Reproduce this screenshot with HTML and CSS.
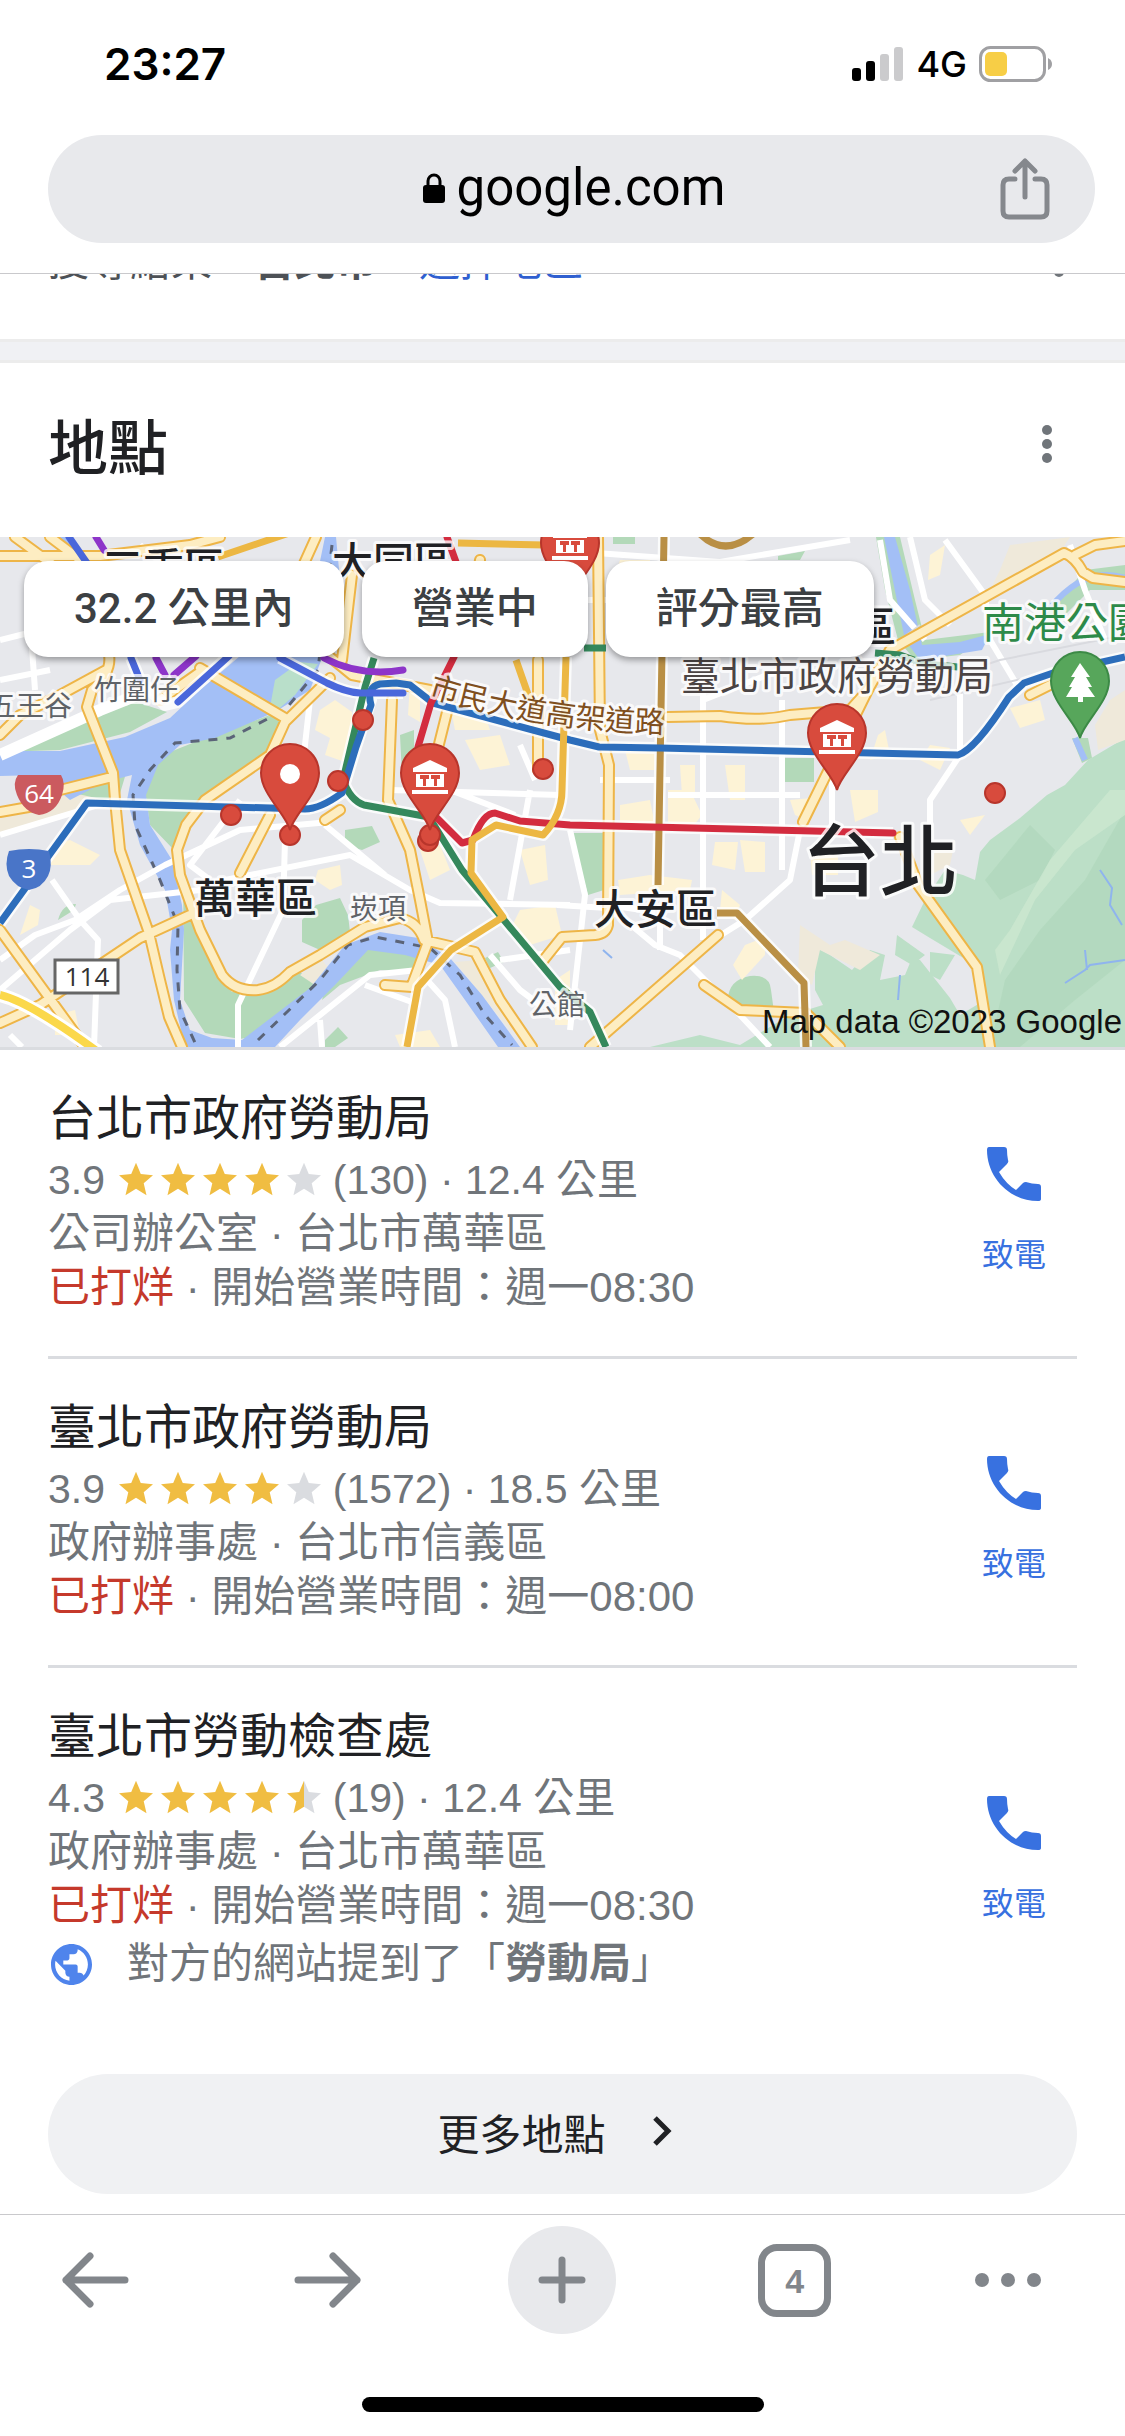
FILE: index.html
```html
<!DOCTYPE html>
<html lang="zh-Hant">
<head>
  <meta charset="UTF-8">
  <meta name="viewport" content="width=device-width, initial-scale=1.0">
  <title>地點 - google.com</title>
  <link rel="stylesheet" href="styles.css">
</head>
<body>
  <header class="top">
    <div class="status">
      <span class="time">23:27</span>
      <div class="status-right">
        <svg class="signal" viewBox="0 0 52 36">
          <rect x="0" y="22" width="9" height="13" rx="3"/>
          <rect x="14" y="15" width="9" height="20" rx="3"/>
          <rect class="off" x="28" y="8" width="9" height="27" rx="3"/>
          <rect class="off" x="42" y="1" width="9" height="34" rx="3"/>
        </svg>
        <span class="network">4G</span>
        <svg class="battery" viewBox="0 0 74 36">
          <rect x="1.5" y="1.5" width="64" height="33" rx="10" fill="none" stroke="#a0a0a3" stroke-width="3"/>
          <rect x="6" y="6" width="22" height="24" rx="5" fill="#f7ce46"/>
          <path d="M69 12q4 2 4 6t-4 6z" fill="#a0a0a3"/>
        </svg>
      </div>
    </div>
    <div class="address">
      <div class="url">
        <svg class="lock" viewBox="0 0 22 30">
          <rect x="0" y="12" width="22" height="18" rx="3"/>
          <path d="M5 13V8a6 6 0 0 1 12 0v5" fill="none" stroke="#000" stroke-width="3"/>
        </svg>
        <span>google.com</span>
      </div>
      <button class="share" aria-label="分享">
        <svg viewBox="0 0 50 62">
          <path d="M15 21H9q-6 0-6 6v26q0 6 6 6h32q6 0 6-6V27q0-6-6-6h-6M25 39V3M15 13L25 3l10 10"/>
        </svg>
      </button>
    </div>
  </header>

  <main>
    <div class="region">
      <div class="region-line">
        <span>搜尋結果</span><b>台北市</b><a href="#">選擇地區</a>
        <svg class="region-more" viewBox="0 0 12 40"><circle cx="6" cy="6" r="5"/><circle cx="6" cy="20" r="5"/><circle cx="6" cy="34" r="5"/></svg>
      </div>
    </div>
    <div class="divider"></div>

    <div class="heading">
      <h2>地點</h2>
      <button class="more" aria-label="更多選項">
        <svg viewBox="0 0 12 40"><circle cx="6" cy="6" r="5"/><circle cx="6" cy="20" r="5"/><circle cx="6" cy="34" r="5"/></svg>
      </button>
    </div>

    <div class="map">
      <svg class="map-art" viewBox="0 537 1125 510" preserveAspectRatio="xMidYMid slice">
        <defs>
          <path id="pin" d="M0 0C-4-16-29-36-29-57A29 29 0 0 1 29-57C29-36 4-16 0 0Z"/>
          <g id="museum">
            <path d="M-17-62V-66L0-74 17-66V-62ZM-14-60H14V-47H-14ZM-18-44H18V-40H-18Z" fill="#fff"/>
            <path d="M-10-59H-1V-55H-4V-48H-7V-55H-10ZM1-59H10V-55H7V-48H4V-55H1Z" fill="#d84b3d"/>
          </g>
          <path id="expressway" d="M428 696Q545 732 672 733"/>
          <path id="roads" d="M0 556H100L190 545 220 537M15 537L60 570M50 537L120 590M109 655Q112 672 92 690L87 707 113 773 115 800 120 850 149 933 160 980 169 1017 182 1047M106 670L60 695 20 715 0 735M200 668L285 718M330 678L285 722 270 755 205 800 186 825 177 850 180 875 200 930 222 975Q235 992 258 990 275 988 290 972L320 955 365 927 400 918Q418 922 424 940L475 952 500 1000 532 1047M316 537L302 568M352 575L342 660M330 657L352 675 430 690M392 700L388 800 410 850 420 900 428 942 412 985M0 812L40 805M60 790L108 778M0 1023L40 1005 140 938 190 915M0 930L85 1047M270 815L240 873M450 700L435 760M538 660V770M598 537L600 730 609 765 608 925Q606 934 595 935L562 937 542 962M668 717L720 716Q760 722 790 715L850 710 868 690 890 650 1064 553Q1075 557 1083 572L1093 578 1125 582M1075 555L1095 545 1125 541M868 690L803 822M718 935L590 1047M704 985L740 1010 806 1013 840 1047M900 837L918 885 977 967 990 1047M340 810L325 820M1030 695L1050 685M480 560L470 620M385 985L412 987M200 672L160 700"/>
        </defs>
        <rect y="537" width="1125" height="510" fill="#e7e8ec"/>

        <!-- parks -->
        <g fill="#b3d9b9">
          <path d="M0 752L60 722 130 700 167 712 130 732 60 750ZM270 655L300 657 250 700 240 695ZM145 790L150 760 200 740 270 715 282 722 268 750 205 795 180 830 174 850 150 825ZM40 800L100 765 130 760 118 800ZM183 865L192 912 212 965 232 992 265 992 300 972 318 988 262 1035 240 1039 205 1033 184 1000ZM345 830L372 826 380 842 362 850 345 845ZM302 920L316 905 340 898 348 915 350 932 320 950 302 942ZM330 970L365 940 418 955 412 972 380 970 340 985 322 1000ZM485 958L498 952 504 962 490 968ZM325 1040L338 1027 348 1038 335 1047 325 1047ZM571 833H604V890L588 895ZM785 758H814V782H785ZM613 537H635V544H613ZM778 556L805 551 800 560H778ZM400 735L414 730V765L402 775ZM58 920Q62 904 76 904L74 910ZM728 1000Q728 980 750 976Q770 974 771 990L774 1012H740Z"/>
          <path d="M876 537H900L915 600 925 640 990 632 960 655 915 660 898 640 885 590ZM1045 615L1085 570 1125 565V590L1090 590 1060 620ZM1072 738H1088L1092 758 1082 763Z"/>
        </g>
        <g fill="#bcdfc7">
          <path d="M1125 738L1088 760 1065 785 1047 795 1020 818 990 840 980 852 975 880 963 875 945 870 925 900 912 927 930 938 975 965 985 1000 960 1015 950 998 920 960 912 958 905 975 880 980 885 955 870 950 852 970 830 955 815 947 815 990 823 1005 790 1015 740 1045 700 1035 650 1047H1125Z"/>
          <path d="M897 935L925 955 912 965 895 955ZM930 952L955 955 940 980 930 975Z"/>
        </g>
        <path d="M1125 810L1085 880 1040 930 1005 980 990 1047H1020L1075 1000 1125 960ZM1030 825L1055 850 1040 880 1000 900 985 880Z" fill="#aed6b9" opacity=".6"/>
        <path d="M1110 790L1050 860 1010 930 995 950 1000 975 1035 900 1075 850 1125 815V790Z" fill="#cce7cf" opacity=".8"/>
        <g fill="#efe9da">
          <path d="M0 810L60 790 105 800 40 822 0 835ZM1010 545L1070 537 1055 560 1020 585 985 600 1000 570ZM800 925L830 945 845 940 880 955 860 970 820 950 812 985 798 975ZM1110 700L1125 690V740L1098 750 1095 725ZM455 962L480 960 525 1030 510 1030ZM300 975L322 960 330 970 315 985ZM955 840L950 865 930 875 935 850Z"/>
        </g>
        <g fill="#fdf3d6">
          <path d="M320 710L335 700 352 712V748L345 762 325 755 330 738 315 730ZM410 683L420 695V722L408 715ZM450 705L480 700 490 730H455ZM620 560H650V575H615ZM620 805L650 800 655 825H620ZM668 790H690L702 815 690 830 668 822ZM715 842H738L735 870 712 865ZM740 840L765 842V872H745ZM618 880L650 875 692 880 690 890 620 895ZM722 890L740 905 735 920 720 910ZM745 945L765 937 765 955 742 980 733 965ZM850 790H878V812L855 822ZM878 735L885 730 890 755 870 760ZM930 745L950 748 940 770 920 760ZM1010 708L1040 700 1045 720 1020 728ZM625 750H655V770H630ZM725 765H745V800H730ZM680 765H695V795H682ZM318 870L340 865 342 885 330 890 315 880ZM50 845L70 840 100 855 90 865 50 865ZM30 905L40 910 38 925 20 935ZM520 850L545 845 548 880 530 885ZM520 910L555 905 562 935 530 945 510 930ZM420 850L440 845 450 870 430 880ZM395 1035L430 1030 440 1047H400ZM55 1015L75 1010 80 1035 55 1035ZM810 850H838V875H812ZM930 555L945 545 940 575 928 580ZM555 980L570 970V1025H555ZM790 800L812 798 808 820 795 815ZM960 820L985 815 970 835ZM465 740L500 735 510 765 480 770Z"/>
        </g>

        <!-- rivers -->
        <g fill="#a3bff6">
          <path d="M0 751L60 751 125 737 170 718 200 690 240 656 312 600 325 537H336L340 580 325 650 310 690 275 712 215 738 180 745 158 765 146 795 150 825 172 860 182 905 184 930 180 1000 190 1030 212 1038 242 1040 310 988 345 945 380 932 418 938 450 958 482 995 520 1047H498L465 1000 440 965 405 955 368 950 335 985 300 1020 275 1047H185L174 1000 170 950 172 930 165 890 140 845 127 800 132 775 105 782 70 800 40 775 0 776Z"/>
          <path d="M55 537H68L92 562H80ZM884 537H895L910 590 922 645 960 642 990 634 982 650 920 660 905 640Z"/>
        </g>
        <path d="M268 718L275 680 300 662 318 664 295 695Z" fill="#b9dfca"/>
        <path d="M1050 608Q1085 565 1125 578M1075 738L1085 760" fill="none" stroke="#a3bff6" stroke-width="6"/>
        <path d="M1100 870L1112 888 1110 905 1122 925M1065 983L1085 970 1090 965 1125 960M1085 950L1087 970M900 975L898 1000M603 950L612 958" fill="none" stroke="#8fb4ee" stroke-width="2"/>
        <path d="M332 545L328 580 318 670 285 710 230 738 175 743 150 770 133 795 135 825 160 880 178 925 177 970 180 1010 197 1047M258 1040L320 980 348 945 375 937 430 948 460 975 485 1015 512 1045" fill="none" stroke="#5b6478" stroke-width="3" stroke-dasharray="9 9"/>

        <!-- minor roads -->
        <g fill="none" stroke="#fff" stroke-width="6" stroke-linejoin="round">
          <path d="M0 755L100 710 150 690" stroke-width="12"/>
          <path d="M0 835L115 800M0 990L70 930 110 900 200 890M0 960L35 935 75 920 120 890 165 865 240 830 330 822M52 880L80 920 98 940 94 1047M240 800L190 865 210 880M285 840L283 910 238 1005V1047M200 885L350 855 410 890 440 903 570 905M325 825L385 875M280 1047L370 975 418 970 445 1000 455 1047M365 985L420 1005M320 1020L322 1047"/>
          <path d="M0 640L40 630M0 680L50 670M30 620L35 690M300 790L310 700M390 790L560 795M450 790L515 815M530 790L510 900M520 745L535 780M570 830L585 895 570 1030M557 905L608 908 625 920 655 945 680 955 740 1015 770 1047M490 955L520 990 540 1005M500 960L570 950"/>
          <path d="M555 550L720 562 850 540M703 690V940M703 700L780 670M782 700V870M832 750V830M668 795H800M800 830L790 880 745 920 705 945M930 830V800L960 755V690M880 540L890 600 925 640M910 537L925 600 950 625M945 540L985 595 990 640 1020 690M1070 545L1085 590 1105 640M575 600H665M600 780H670M660 905V950M608 905L655 912"/>
          <path d="M920 625L900 640M1125 635L1000 660 985 665M1060 670L930 700" stroke="#d9dadf" stroke-width="2"/>
          <path d="M10 1035L22 1047M140 545L180 580M130 600L260 620" />
        </g>

        <!-- main roads -->
        <use class="road-edge" href="#roads"/>
        <use class="road-fill" href="#roads"/>
        <g fill="none" stroke-linejoin="round">
          <path d="M0 995Q30 1002 98 1052" stroke="#fff" stroke-width="14"/>
          <path d="M0 995Q30 1002 98 1052" stroke="#fbd84a" stroke-width="8"/>
          <path d="M218 557L298 530M458 543L545 545M516 660L530 700" stroke="#ecb743" stroke-width="7"/>
        </g>

        <!-- transit lines, white casing first -->
        <g fill="none" stroke-linejoin="round">
          <path class="casing" d="M0 923L87 803 305 809Q320 809 342 793L356 747 371 700Q370 687 396 683L410 685 433 703 570 740 599 747 660 748 958 755Q975 750 1009 697L1024 683 1053 673 1125 657M566 657L562 790Q562 815 543 835L496 825 472 840 471 873 503 917 451 950 418 987 407 1047M664 537L658 885M717 913H737L804 983 806 1047M374 658L365 687 343 780Q350 800 364 805L429 817 462 870 560 987 590 1012 606 1047M436 817L462 843 473 840Q483 813 495 813L520 821 570 825 893 833M131 658L140 680 165 705 178 702 229 656M280 658L327 683Q345 692 360 693H403"/>
          <g stroke-width="7">
            <path d="M700 534Q725 558 753 534M664 537L658 885M717 913H737L804 983 806 1047" stroke="#b98f45"/>
            <path d="M374 658L365 687 343 780Q350 800 364 805L429 817 462 870 560 987 590 1012 606 1047M584 648H606M875 653L900 655 925 664 958 667" stroke="#35885c"/>
            <path d="M0 923L87 803 305 809Q320 809 342 793L356 747 371 705Q366 687 380 684L396 683 410 685 433 703 570 740 599 747 660 748 958 755Q975 750 1009 697L1024 683 1053 673 1125 657" stroke="#2c6dbb"/>
            <path d="M454 657L431 703 418 747M447 537L456 562M436 817L462 843 473 840Q483 813 495 813L520 821 570 825 893 833" stroke="#d32c3f" stroke-linecap="round"/>
            <path d="M566 657L562 790Q562 815 543 835L496 825 472 840 471 873 503 917 451 950 418 987 407 1047" stroke="#ecb743"/>
            <path d="M69 537L87 563M131 658L140 680M178 702L229 656M280 658L327 683Q345 692 360 693H403" stroke="#4a67db" stroke-linecap="round"/>
            <path d="M96 537L104 550M156 658L165 675M174 675L196 656M324 658Q360 677 403 670" stroke="#8d35c9" stroke-linecap="round"/>
          </g>
        </g>

        <!-- road shields -->
        <path d="M18 775H61Q66 783 62 795 56 813 39 815 24 812 17 795 12 783 18 775Z" fill="#cb5a5f"/>
        <text class="shield" x="39" y="803">64</text>
        <path d="M9 851Q29 847 49 851 53 866 48 876 42 888 29 890 16 888 9 876 4 864 9 851Z" fill="#4975c8"/>
        <text class="shield" x="29" y="878">3</text>
        <rect x="55" y="960" width="63" height="33" fill="#fff" stroke="#666" stroke-width="3"/>
        <text class="shield plain" x="87" y="986">114</text>

        <!-- place names -->
        <g class="names">
          <text class="district" x="102" y="583">三重區</text>
          <text class="district" x="332" y="577">大同區</text>
          <text class="district" x="773" y="642">內湖區</text>
          <text class="district" x="194" y="913">萬華區</text>
          <text class="district" x="594" y="924">大安區</text>
          <text class="village" x="94" y="700">竹圍仔</text>
          <text class="village" x="-12" y="716">五王谷</text>
          <text class="village" x="350" y="919">崁項</text>
          <text class="village" x="529" y="1015">公館</text>
          <text class="road-name"><textPath href="#expressway">市民大道高架道路</textPath></text>
          <text class="poi" x="681" y="690">臺北市政府勞動局</text>
          <text class="park" x="982" y="638">南港公園</text>
          <text class="city" x="802" y="890">台北</text>
        </g>

        <!-- pins -->
        <g fill="#d84b3d" stroke="#b8352b" stroke-width="2">
          <circle cx="363" cy="720" r="10"/><circle cx="338" cy="781" r="10"/>
          <circle cx="543" cy="769" r="10"/><circle cx="231" cy="815" r="10"/>
          <circle cx="995" cy="793" r="10"/><circle cx="290" cy="835" r="10"/>
          <circle cx="428" cy="841" r="10"/><circle cx="430" cy="835" r="10"/>
          <use href="#pin" x="290" y="830"/>
          <use href="#pin" x="430" y="830"/>
          <use href="#pin" x="837" y="790"/>
          <use href="#pin" x="570" y="600"/>
          <use href="#pin" x="1080" y="738" class="green-pin"/>
        </g>
        <circle cx="290" cy="774" r="10" fill="#fff"/>
        <use href="#museum" x="430" y="834"/>
        <use href="#museum" x="837" y="794"/>
        <use href="#museum" x="570" y="600"/>
        <path d="M1080 663L1090 677H1086L1092 687H1088L1095 697H1083V702H1078V697H1066L1072 687H1069L1075 677H1071Z" fill="#fff"/>
        <text class="credit" x="1122" y="1033">Map data ©2023 Google</text>
      </svg>
      <div class="chips">
        <button class="chip">32.2 公里內</button>
        <button class="chip">營業中</button>
        <button class="chip">評分最高</button>
      </div>
    </div>

    <svg class="symbols">
      <symbol id="star" viewBox="2 2 20 19"><path d="M12 17.270L18.180 21l-1.640-7.030L22 9.240l-7.190-.610L12 2 9.190 8.630 2 9.240l5.460 4.730L5.820 21z"/></symbol>
      <symbol id="phone" viewBox="0 0 54 54"><path d="M2 0h15q3 0 3 3 0 5 1 10 1 2-1 4l-8 8q7 12 17 18l7-7q1-1 3-1 6 2 12 2 3 0 3 3v12q0 2-3 2C22 54 0 30 0 3q0-3 2-3z"/></symbol>
    </svg>

    <div class="places">
      <article class="place">
        <div class="info">
          <h3>台北市政府勞動局</h3>
          <p class="rating">3.9 <span class="stars"><svg><use href="#star"/></svg><svg><use href="#star"/></svg><svg><use href="#star"/></svg><svg><use href="#star"/></svg><svg class="empty"><use href="#star"/></svg></span> (130) · 12.4 公里</p>
          <p>公司辦公室 · 台北市萬華區</p>
          <p><span class="closed">已打烊</span> · 開始營業時間：週一08:30</p>
        </div>
        <a class="call" href="#"><svg><use href="#phone"/></svg>致電</a>
      </article>

      <article class="place">
        <div class="info">
          <h3>臺北市政府勞動局</h3>
          <p class="rating">3.9 <span class="stars"><svg><use href="#star"/></svg><svg><use href="#star"/></svg><svg><use href="#star"/></svg><svg><use href="#star"/></svg><svg class="empty"><use href="#star"/></svg></span> (1572) · 18.5 公里</p>
          <p>政府辦事處 · 台北市信義區</p>
          <p><span class="closed">已打烊</span> · 開始營業時間：週一08:00</p>
        </div>
        <a class="call" href="#"><svg><use href="#phone"/></svg>致電</a>
      </article>

      <article class="place">
        <div class="info">
          <h3>臺北市勞動檢查處</h3>
          <p class="rating">4.3 <span class="stars"><svg><use href="#star"/></svg><svg><use href="#star"/></svg><svg><use href="#star"/></svg><svg><use href="#star"/></svg><svg viewBox="2 2 20 19"><path d="M12 17.270L18.180 21l-1.640-7.030L22 9.240l-7.190-.610L12 2z" class="rest"/><path d="M12 2L9.190 8.630 2 9.240l5.460 4.730L5.820 21 12 17.270z"/></svg></span> (19) · 12.4 公里</p>
          <p>政府辦事處 · 台北市萬華區</p>
          <p><span class="closed">已打烊</span> · 開始營業時間：週一08:30</p>
          <p class="mention">
            <svg viewBox="2 2 20 20"><path d="M12 2C6.480 2 2 6.480 2 12s4.480 10 10 10 10-4.480 10-10S17.520 2 12 2zm-1 17.930c-3.950-.490-7-3.850-7-7.930 0-.620.080-1.210.210-1.790L9 15v1c0 1.100.900 2 2 2v1.930zm6.900-2.540c-.260-.810-1-1.390-1.900-1.390h-1v-3c0-.550-.450-1-1-1H8v-2h2c.550 0 1-.450 1-1V7h2c1.100 0 2-.900 2-2v-.410c2.930 1.190 5 4.060 5 7.410 0 2.080-.800 3.970-2.100 5.390z"/></svg>
            <span>對方的網站提到了「<b>勞動局</b>」</span>
          </p>
        </div>
        <a class="call" href="#"><svg><use href="#phone"/></svg>致電</a>
      </article>

      <button class="more-places">更多地點
        <svg viewBox="0 0 36 30"><path d="M3 2l13 13L3 28"/></svg>
      </button>
    </div>
  </main>

  <footer class="bottom">
    <nav class="toolbar">
      <button aria-label="返回"><svg viewBox="0 0 68 56"><path d="M64 28H5M29 4L5 28l24 24"/></svg></button>
      <button aria-label="前進"><svg viewBox="0 0 68 56"><path d="M4 28h59M39 4l24 24-24 24"/></svg></button>
      <button class="add" aria-label="新分頁"><svg viewBox="0 0 48 48"><path d="M24 4v40M4 24h40"/></svg></button>
      <button aria-label="分頁"><span class="tabs">4</span></button>
      <button aria-label="選單"><svg class="dots" viewBox="0 0 68 16"><circle cx="8" cy="8" r="7"/><circle cx="34" cy="8" r="7"/><circle cx="60" cy="8" r="7"/></svg></button>
    </nav>
    <div class="home"></div>
  </footer>
</body>
</html>
```
FILE: styles.css
```css
* { box-sizing: border-box; }
body { margin: 0; background: #fff; color: #202124; font-family: "Liberation Sans", "Noto Sans CJK TC", sans-serif; min-height: 100vh; display: flex; flex-direction: column; }
h2, h3, p { margin: 0; font-weight: 400; }
button { border: none; background: none; padding: 0; font: inherit; color: inherit; cursor: pointer; }
a { color: #2f5fd0; text-decoration: none; }
svg { display: block; }

/* browser top */
.top { border-bottom: 1px solid #c9c9cc; padding: 0 30px 30px 48px; }
.status { display: flex; justify-content: space-between; align-items: center; height: 135px; padding: 0 42px 8px 56px; font-family: Inter, sans-serif; color: #000; }
.time { font-size: 44px; font-weight: 600; }
.status-right { display: flex; align-items: center; gap: 12px; }
.signal { width: 52px; height: 36px; }
.signal .off { fill: #cbcbcd; }
.network { font-size: 36px; font-weight: 500; }
.battery { width: 74px; height: 36px; }
.address { position: relative; display: flex; align-items: center; justify-content: center; height: 108px; border-radius: 54px; background: #e8e9ec; }
.url { display: flex; align-items: center; gap: 12px; padding: 0 0 3px 5px; font-family: Roboto, sans-serif; font-size: 51px; color: #000; }
.lock { width: 22px; height: 30px; }
.share { position: absolute; right: 45px; top: 23px; }
.share svg { width: 50px; height: 62px; fill: none; stroke: #85888d; stroke-width: 5; stroke-linecap: round; stroke-linejoin: round; }

/* region line, scrolled partly under the top bar */
.region { height: 65px; overflow: hidden; padding: 0 60px 0 48px; }
.region-line { display: flex; align-items: center; gap: 42px; margin-top: -36px; font-size: 41px; line-height: 48px; color: #4d5156; }
.region-more { width: 12px; height: 40px; margin-left: auto; align-self: flex-start; fill: #70757a; }
.divider { height: 24px; background: #f0f1f4; border-top: 3px solid #ececec; border-bottom: 3px solid #ececec; }

.heading { display: flex; justify-content: space-between; align-items: center; height: 174px; padding: 0 72px 12px 48px; }
.heading h2 { padding-top: 12px; font-size: 60px; font-weight: 500; line-height: 80px; }
.more svg { width: 12px; height: 40px; fill: #70757a; }

/* map */
.map { position: relative; border-bottom: 3px solid #dadce0; }
.map-art { width: 100%; height: 510px; font-family: "Noto Sans CJK TC", sans-serif; }
.road-edge, .road-fill { fill: none; stroke-linejoin: round; stroke-linecap: round; }
.road-edge { stroke: #eeb547; stroke-width: 12px; }
.road-fill { stroke: #fdedc2; stroke-width: 8px; }
.casing { stroke: #fff; stroke-width: 12px; stroke-opacity: .8; }
.names text { paint-order: stroke; stroke: #fff; stroke-width: 6px; stroke-opacity: .8; stroke-linejoin: round; fill: #202124; }
.names .district { font-size: 41px; font-weight: 500; }
.names .village { font-size: 28px; fill: #5f6368; }
.names .road-name { font-size: 30px; fill: #7f4f1e; }
.names .poi { font-size: 39px; fill: #4b4444; }
.names .park { font-size: 42px; fill: #2d8a49; }
.names .city { font-size: 78px; font-weight: 500; }
.shield { font-family: "Open Sans", sans-serif; font-size: 26px; text-anchor: middle; fill: #fff; }
.shield.plain { fill: #333; }
.green-pin { fill: #57a65b; stroke: #3c8a46; }
.credit { font-family: "Liberation Sans", sans-serif; font-size: 33px; text-anchor: end; fill: #111; }
.chips { position: absolute; top: 24px; left: 24px; display: flex; gap: 18px; }
.chip { height: 96px; padding: 0 50px 9px; border-radius: 24px; background: #fff; box-shadow: 0 3px 6px rgba(0, 0, 0, .35); font-family: Roboto, "Noto Sans CJK TC", sans-serif; font-size: 42px; font-weight: 500; color: #3c4043; white-space: nowrap; }

/* place list */
.symbols { position: absolute; width: 0; height: 0; }
.places { padding: 0 48px 20px; }
.place { display: flex; justify-content: space-between; align-items: center; padding: 35px 0 41px; border-bottom: 3px solid #dadce0; }
.place:nth-of-type(3) { border-bottom: none; }
.info h3 { font-size: 48px; line-height: 68px; }
.info p { font-size: 42px; line-height: 54px; color: #70757a; white-space: nowrap; }
.info .rating { font-size: 41px; }
.stars { display: inline-flex; gap: 8px; margin-left: 3px; vertical-align: -2px; }
.stars svg { width: 34px; height: 34px; fill: #f0bd42; }
.stars .empty, .stars .rest { fill: #dadce0; }
.info .closed { color: #c5392b; }
.info .mention { display: flex; align-items: center; gap: 35px; line-height: 62px; padding-left: 3px; }
.mention svg { width: 41px; height: 41px; fill: #4f84ec; }
.call { display: flex; flex-direction: column; align-items: center; gap: 30px; width: 126px; padding-top: 25px; font-size: 32px; line-height: 48px; color: #3871e0; }
.call svg { width: 54px; height: 54px; fill: #3871e0; }
.more-places { display: flex; align-items: center; justify-content: center; gap: 46px; width: 100%; height: 120px; margin-top: 38px; padding-bottom: 6px; border-radius: 60px; background: #f0f1f3; font-size: 42px; }
.more-places svg { width: 36px; height: 30px; fill: none; stroke: #202124; stroke-width: 5; }

/* browser bottom */
.bottom { margin-top: auto; border-top: 1px solid #c9c9cc; padding-bottom: 24px; }
.toolbar { display: flex; justify-content: space-between; align-items: center; padding: 11px 83px 0 41px; }
.toolbar button { display: flex; align-items: center; justify-content: center; width: 108px; height: 108px; }
.toolbar button:last-child { width: 68px; }
.toolbar svg { width: 68px; height: 56px; fill: none; stroke: #82868b; stroke-width: 7; stroke-linecap: round; stroke-linejoin: round; }
.toolbar .add { border-radius: 50%; background: #e8e9ec; }
.toolbar .add svg { width: 48px; height: 48px; }
.toolbar .dots { height: 16px; fill: #82868b; stroke: none; }
.tabs { display: block; width: 73px; height: 73px; border: 7px solid #82868b; border-radius: 19px; font: 700 34px/60px "Liberation Sans", sans-serif; color: #82868b; }
.home { width: 402px; height: 15px; margin: 63px auto 0; border-radius: 8px; background: #000; }
```
